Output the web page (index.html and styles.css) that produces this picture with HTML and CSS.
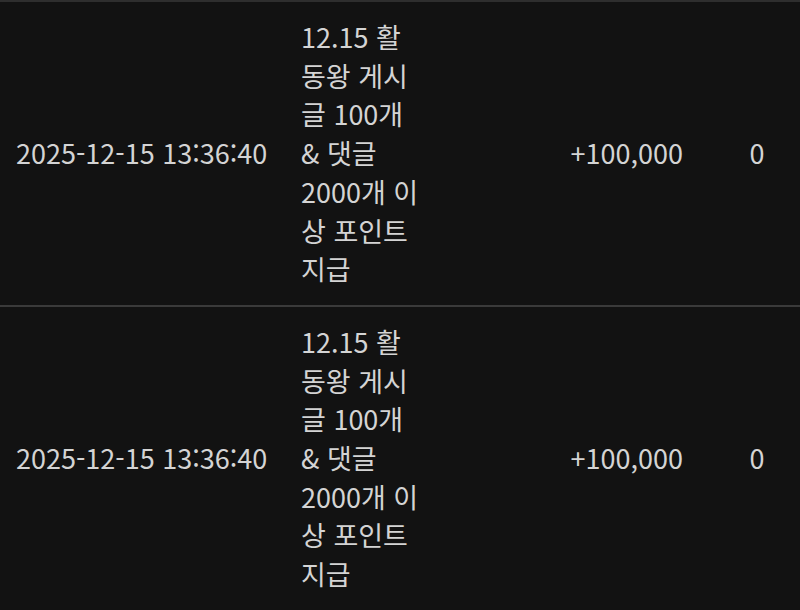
FILE: index.html
```html
<!DOCTYPE html>
<html lang="ko">
<head>
<meta charset="utf-8">
<link rel="stylesheet" href="styles.css">
</head>
<body>
<div class="table">
  <div class="row">
    <div class="cell date">2025-12-15 13:36:40</div>
    <div class="cell desc">12.15 활동왕 게시글 100개 &amp; 댓글 2000개 이상 포인트 지급</div>
    <div class="cell amount">+100,000</div>
    <div class="cell balance">0</div>
  </div>
  <div class="row">
    <div class="cell date">2025-12-15 13:36:40</div>
    <div class="cell desc">12.15 활동왕 게시글 100개 &amp; 댓글 2000개 이상 포인트 지급</div>
    <div class="cell amount">+100,000</div>
    <div class="cell balance">0</div>
  </div>
</div>
</body>
</html>
```
FILE: styles.css
```css
html, body {
  margin: 0;
  padding: 0;
  background: #121212;
}
body {
  font-family: "Noto Sans CJK KR", "Noto Sans", sans-serif;
  font-size: 27px;
  line-height: 38.7px;
  color: #d4d4d4;
  overflow: hidden;
}
.table {
  border-top: 2px solid #2e2e2e;
}
.row {
  display: grid;
  grid-template-columns: 285px 152px 277px 86px;
  align-items: center;
  padding: 16px 0;
  border-bottom: 2px solid #3a3a3a;
}
.cell {
  padding: 0 16px;
  white-space: nowrap;
}
.desc {
  white-space: normal;
}
.amount {
  text-align: right;
  padding-right: 31px;
}
.balance {
  text-align: center;
  padding: 0;
}
```
